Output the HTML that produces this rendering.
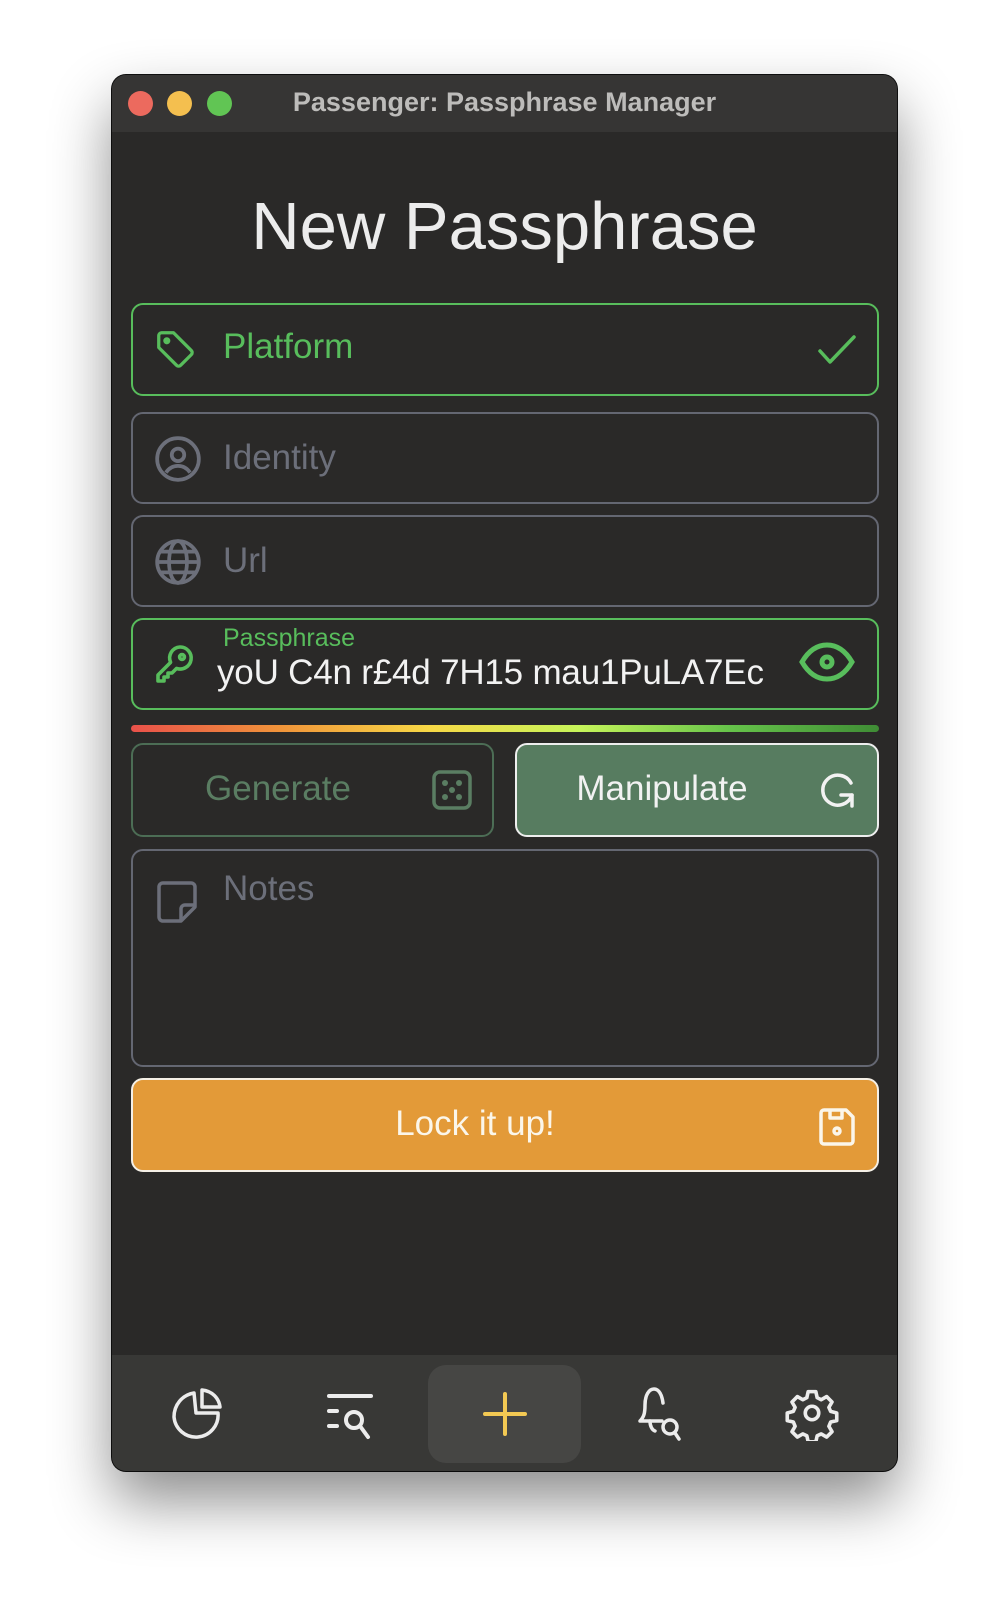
<!DOCTYPE html>
<html><head><meta charset="utf-8"><style>
*{margin:0;padding:0;box-sizing:border-box}
body{width:1008px;height:1618px;background:#fff;position:relative;overflow:hidden;font-family:"Liberation Sans",sans-serif}
.win{position:absolute;left:112px;top:75px;width:785px;height:1396px;background:#2a2928;border-radius:14px;overflow:hidden;box-shadow:0 30px 60px rgba(0,0,0,.45),0 0 0 1px #111;}
.tb{position:absolute;left:0;top:0;width:100%;height:57px;background:#363534}
.dot{position:absolute;top:16px;width:25px;height:25px;border-radius:50%}
.title{position:absolute;left:0;right:0;top:12px;text-align:center;color:#bdbcba;font-weight:bold;font-size:27px}
h1{position:absolute;left:0;right:0;top:113px;text-align:center;color:#ececec;font-weight:normal;font-size:67px}
.f{position:absolute;left:19px;width:748px;border:2px solid #646772;border-radius:12px}
.g{border-color:#58bd5c}
.lbl{position:absolute;left:90px;font-size:35px;color:#6c6f7a}
.ic{position:absolute}
.nav{position:absolute;left:0;top:1280px;width:100%;height:116px;background:#383836}
.hl{position:absolute;left:316px;top:10px;width:153px;height:98px;background:#464644;border-radius:18px}
</style></head><body>
<div class="win">
 <div class="tb">
  <div class="dot" style="left:16px;background:#ec6a5e"></div>
  <div class="dot" style="left:55px;background:#f4bf4f"></div>
  <div class="dot" style="left:95px;background:#61c554"></div>
  <div class="title">Passenger: Passphrase Manager</div>
 </div>
 <h1>New Passphrase</h1>

 <div class="f g" style="top:228px;height:93px">
  <svg class="ic" style="left:20px;top:22px" width="46" height="46" viewBox="0 0 24 24" fill="none" stroke="#58bd5c" stroke-width="1.7" stroke-linejoin="round"><path d="M3 4.5v6.2l9.3 9.3a1.5 1.5 0 002.1 0l5.6-5.6a1.5 1.5 0 000-2.1L10.7 3H4.5A1.5 1.5 0 003 4.5z"/><circle cx="7.2" cy="7.2" r="1" fill="#58bd5c"/></svg>
  <div class="lbl" style="top:22px;color:#58bd5c">Platform</div>
  <svg class="ic" style="right:20px;top:28px" width="40" height="34" viewBox="0 0 40 34" fill="none" stroke="#58bd5c" stroke-width="3.5" stroke-linecap="round" stroke-linejoin="round"><path d="M3 18l10 11L37 4"/></svg>
 </div>

 <div class="f" style="top:337px;height:92px">
  <svg class="ic" style="left:20px;top:20px" width="50" height="50" viewBox="0 0 24 24" fill="none" stroke="#6c6f7a" stroke-width="1.8"><circle cx="12" cy="12" r="10"/><circle cx="12" cy="10" r="3"/><path d="M6.2 18.5c1.5-2.2 3.5-3.2 5.8-3.2s4.3 1 5.8 3.2"/></svg>
  <div class="lbl" style="top:24px">Identity</div>
 </div>

 <div class="f" style="top:440px;height:92px">
  <svg class="ic" style="left:20px;top:20px" width="50" height="50" viewBox="0 0 24 24" fill="none" stroke="#6c6f7a" stroke-width="1.8"><circle cx="12" cy="12" r="10"/><ellipse cx="12" cy="12" rx="4.3" ry="10"/><path d="M2 12h20M3.5 7h17M3.5 17h17"/></svg>
  <div class="lbl" style="top:24px">Url</div>
 </div>

 <div class="f g" style="top:543px;height:92px">
  <svg class="ic" style="left:18px;top:20px" width="48" height="48" viewBox="0 0 24 24" fill="none" stroke="#58bd5c" stroke-width="1.8" stroke-linejoin="round" stroke-linecap="round"><path d="M14.5 3.5a5.5 5.5 0 00-4.7 7.7L3.5 17.5v3h3v-2h2v-2h2l2.3-2.3a5.5 5.5 0 101.7-10.7z"/><circle cx="15.5" cy="8.5" r="1.2"/></svg>
  <div style="position:absolute;left:90px;top:4px;font-size:25px;color:#58bd5c">Passphrase</div>
  <div style="position:absolute;left:84px;top:33px;font-size:35px;color:#f2f2f2;letter-spacing:-0.2px">yoU C4n r£4d 7H15 mau1PuLA7Ec</div>
  <svg class="ic" style="right:22px;top:22px" width="56" height="40" viewBox="0 0 56 40" fill="none" stroke="#58bd5c" stroke-width="5"><path d="M3 20C10 8 19 3 28 3s18 5 25 17c-7 12-16 17-25 17S10 32 3 20z"/><circle cx="28" cy="20" r="5"/></svg>
 </div>

 <div style="position:absolute;left:19px;top:650px;width:748px;height:7px;border-radius:4px;background:linear-gradient(90deg,#e9514a,#f0943a 20%,#f7d846 40%,#c6f45a 60%,#66c34a 80%,#3f8c35)"></div>

 <div class="f" style="top:668px;height:94px;width:363px;border-color:#4c6d55">
  <div style="position:absolute;left:0;width:290px;text-align:center;top:24px;font-size:35px;color:#5a7d62">Generate</div>
  <svg class="ic" style="left:298px;top:24px" width="42" height="42" viewBox="0 0 42 42" fill="none"><rect x="3" y="3" width="36" height="36" rx="6" stroke="#5a7d62" stroke-width="3.5"/><g fill="#5a7d62"><circle cx="14" cy="14" r="3"/><circle cx="28" cy="14" r="3"/><circle cx="21" cy="21" r="3"/><circle cx="14" cy="28" r="3"/><circle cx="28" cy="28" r="3"/></g></svg>
 </div>
 <div class="f" style="top:668px;height:94px;left:403px;width:364px;border-color:#eee;background:#577c60">
  <div style="position:absolute;left:0;width:290px;text-align:center;top:24px;font-size:35px;color:#f2f2f2">Manipulate</div>
  <svg class="ic" style="left:300px;top:26px" width="40" height="40" viewBox="0 0 40 40" fill="none" stroke="#f2f2f2" stroke-width="3.5" stroke-linecap="round" stroke-linejoin="round"><path d="M34 12A15 15 0 1035 24"/><path d="M35 24v11M35 24H24"/></svg>
 </div>

 <div class="f" style="top:774px;height:218px">
  <svg class="ic" style="left:22px;top:28px" width="44" height="44" viewBox="0 0 44 44" fill="none" stroke="#6c6f7a" stroke-width="3.5" stroke-linejoin="round"><path d="M8 4h28a4 4 0 014 4v20L26 42H8a4 4 0 01-4-4V8a4 4 0 014-4z"/><path d="M40 26H30a4 4 0 00-4 4v12"/></svg>
  <div class="lbl" style="top:18px">Notes</div>
 </div>

 <div class="f" style="top:1003px;height:94px;background:#e39a38;border-color:#f5f0e6">
  <div style="position:absolute;left:0;right:0;text-align:center;top:24px;font-size:35px;color:#fbf6ea;padding-right:60px">Lock it up!</div>
  <svg class="ic" style="right:22px;top:28px" width="36" height="38" viewBox="0 0 36 38" fill="none" stroke="#fbf6ea" stroke-width="3.5" stroke-linejoin="round"><path d="M5 2h22l7 7v24a3 3 0 01-3 3H5a3 3 0 01-3-3V5a3 3 0 013-3z"/><path d="M11 2v8h12V2"/><circle cx="18" cy="23" r="3"/></svg>
 </div>

 <div class="nav">
  <div class="hl"></div>
  <svg class="ic" style="left:58px;top:32px" width="56" height="56" viewBox="0 0 56 56" fill="none" stroke="#ececec" stroke-width="3.5" stroke-linejoin="round"><path d="M24 6C12 8 4 18 4 30a22 22 0 0044-4H26z"/><path d="M32 3v17h18C49 11 42 4 32 3z"/></svg>
  <svg class="ic" style="left:214px;top:38px" width="52" height="50" viewBox="0 0 52 50" fill="none" stroke="#ececec" stroke-width="4" stroke-linecap="round"><path d="M3 3h42M3 18h8M3 33h8"/><circle cx="28" cy="27" r="8"/><path d="M34 33l8 11"/></svg>
  <svg class="ic" style="left:371px;top:37px" width="44" height="44" viewBox="0 0 44 44" stroke="#f3c953" stroke-width="4" stroke-linecap="round"><path d="M22 2v40M2 22h40"/></svg>
  <svg class="ic" style="left:524px;top:30px" width="60" height="60" viewBox="0 0 60 60" fill="none" stroke="#ececec" stroke-width="3.5" stroke-linecap="round" stroke-linejoin="round"><path d="M26 36H4c4-4 5-8 5-16C9 10 13 4 18 4s8 6 9 14"/><path d="M14 36c0 5 2 9 5 10"/><circle cx="34" cy="42" r="7"/><path d="M39 48l4 6"/></svg>
  <svg class="ic" style="left:673px;top:30px" width="54" height="56" viewBox="0 0 24 24" fill="none" stroke="#ececec" stroke-width="1.6" stroke-linejoin="round"><path d="M10.3 2.5h3.4l.6 2.7 1.8.9 2.4-1.4 2.4 2.4-1.4 2.4.8 1.8 2.7.7v3.4l-2.7.6-.8 1.9 1.4 2.4-2.4 2.4-2.4-1.4-1.8.8-.6 2.7h-3.4l-.6-2.7-1.8-.8-2.4 1.4-2.4-2.4 1.4-2.4-.8-1.9-2.7-.6v-3.4l2.7-.7.8-1.8-1.4-2.4 2.4-2.4 2.4 1.4 1.8-.9z"/><circle cx="12" cy="12" r="3"/></svg>
 </div>
</div>
</body></html>
